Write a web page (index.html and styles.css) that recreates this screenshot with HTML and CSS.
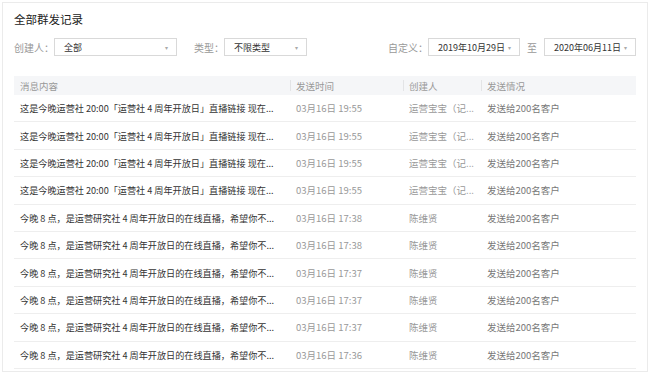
FILE: index.html
```html
<!doctype html>
<html lang="zh-CN">
<head>
    <meta charset="UTF-8">
    <link rel="stylesheet" href="styles.css">
    <title>全部群发记录</title>
</head>
<body>
    <div class="page">
        <h1>全部群发记录</h1>

        <!-- filters -->
        <div class="filters">
            <div class="filter-group">
                <label class="filter-label">创建人：</label>
                <div class="select select-creator"><span>全部</span><i class="arrow">▾</i></div>
                <label class="filter-label label-type">类型：</label>
                <div class="select select-type"><span>不限类型</span><i class="arrow">▾</i></div>
            </div>
            <div class="filter-group">
                <label class="filter-label">自定义：</label>
                <div class="select select-date"><span>2019年10月29日</span><i class="arrow">▾</i></div>
                <span class="filter-label label-to">至</span>
                <div class="select select-date"><span>2020年06月11日</span><i class="arrow">▾</i></div>
            </div>
        </div>

        <table class="records">
            <colgroup>
                <col class="col-msg">
                <col class="col-time">
                <col class="col-creator">
                <col class="col-status">
            </colgroup>
            <thead>
                <tr>
                    <th>消息内容</th>
                    <th>发送时间</th>
                    <th>创建人</th>
                    <th>发送情况</th>
                </tr>
            </thead>
            <tbody>
                <tr>
                    <td class="msg">这是今晚运营社 20:00「运营社 4 周年开放日」直播链接 现在...</td>
                    <td>03月16日 19:55</td>
                    <td>运营宝宝（记...</td>
                    <td class="status">发送给200名客户</td>
                </tr>
                <tr>
                    <td class="msg">这是今晚运营社 20:00「运营社 4 周年开放日」直播链接 现在...</td>
                    <td>03月16日 19:55</td>
                    <td>运营宝宝（记...</td>
                    <td class="status">发送给200名客户</td>
                </tr>
                <tr>
                    <td class="msg">这是今晚运营社 20:00「运营社 4 周年开放日」直播链接 现在...</td>
                    <td>03月16日 19:55</td>
                    <td>运营宝宝（记...</td>
                    <td class="status">发送给200名客户</td>
                </tr>
                <tr>
                    <td class="msg">这是今晚运营社 20:00「运营社 4 周年开放日」直播链接 现在...</td>
                    <td>03月16日 19:55</td>
                    <td>运营宝宝（记...</td>
                    <td class="status">发送给200名客户</td>
                </tr>
                <tr>
                    <td class="msg">今晚 8 点，是运营研究社 4 周年开放日的在线直播，希望你不...</td>
                    <td>03月16日 17:38</td>
                    <td>陈维贤</td>
                    <td class="status">发送给200名客户</td>
                </tr>
                <tr>
                    <td class="msg">今晚 8 点，是运营研究社 4 周年开放日的在线直播，希望你不...</td>
                    <td>03月16日 17:38</td>
                    <td>陈维贤</td>
                    <td class="status">发送给200名客户</td>
                </tr>
                <tr>
                    <td class="msg">今晚 8 点，是运营研究社 4 周年开放日的在线直播，希望你不...</td>
                    <td>03月16日 17:37</td>
                    <td>陈维贤</td>
                    <td class="status">发送给200名客户</td>
                </tr>
                <tr>
                    <td class="msg">今晚 8 点，是运营研究社 4 周年开放日的在线直播，希望你不...</td>
                    <td>03月16日 17:37</td>
                    <td>陈维贤</td>
                    <td class="status">发送给200名客户</td>
                </tr>
                <tr>
                    <td class="msg">今晚 8 点，是运营研究社 4 周年开放日的在线直播，希望你不...</td>
                    <td>03月16日 17:37</td>
                    <td>陈维贤</td>
                    <td class="status">发送给200名客户</td>
                </tr>
                <tr>
                    <td class="msg">今晚 8 点，是运营研究社 4 周年开放日的在线直播，希望你不...</td>
                    <td>03月16日 17:36</td>
                    <td>陈维贤</td>
                    <td class="status">发送给200名客户</td>
                </tr>
            </tbody>
        </table>
    </div>
</body>
</html>
```

FILE: styles.css
```css
body {
    font-family: "Noto Sans CJK SC", "Noto Sans", sans-serif;
    margin: 0;
    padding: 2px 2px 0 2px;
    background: #fff;
    color: #333;
}

.page {
    box-sizing: border-box;
    border: 1px solid #ebebeb;
    padding: 8px 11px 0 11px;
    height: 370px;
    overflow: hidden;
}

h1 {
    font-size: 11.5px;
    font-weight: normal;
    line-height: 16px;
    margin: 0;
    color: #222;
}

.filters {
    display: flex;
    justify-content: space-between;
    align-items: center;
    margin-top: 11px;
    height: 18px;
}

.filter-group {
    display: flex;
    align-items: center;
}

.filter-label {
    font-size: 10px;
    color: #999;
}

.label-type {
    margin-left: 17px;
}

.label-to {
    margin: 0 7px;
}

.select {
    display: flex;
    align-items: center;
    justify-content: space-between;
    box-sizing: border-box;
    height: 18px;
    border: 1px solid #d9d9d9;
    padding: 0 8px 0 9px;
    font-size: 9px;
    color: #333;
}

.select .arrow {
    font-style: normal;
    font-size: 6px;
    color: #aaa;
}

.select-creator {
    width: 123px;
}

.select-type {
    width: 83px;
}

.select-date {
    width: 92px;
}

.records {
    margin-top: 20px;
    width: 622px;
    border-collapse: collapse;
    table-layout: fixed;
    font-size: 9.5px;
}

.col-msg {
    width: 276px;
}

.col-time {
    width: 113px;
}

.col-creator {
    width: 78px;
}

.records th {
    background: #f5f6f8;
    color: #999;
    font-weight: normal;
    text-align: left;
    height: 19px;
    padding: 0 6px;
    position: relative;
}

.records th + th::before {
    content: "";
    position: absolute;
    left: 0;
    top: 4px;
    bottom: 4px;
    border-left: 1px solid #e3e4e6;
}

.records td {
    height: 26.4px;
    padding: 0 6px;
    border-bottom: 1px solid #eeeeee;
    color: #999;
    white-space: nowrap;
}

.records td.msg {
    color: #333;
    font-size: 9.15px;
}

.records td.status {
    color: #777;
}
```
